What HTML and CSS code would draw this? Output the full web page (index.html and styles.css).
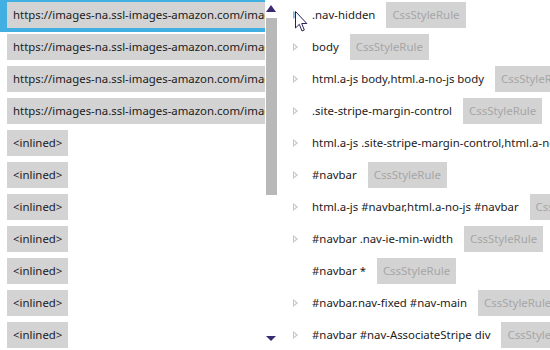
FILE: index.html
```html
<!DOCTYPE html>
<html>
<head>
<meta charset="utf-8">
<link rel="stylesheet" href="styles.css">
</head>
<body>
<div class="app">
  <div class="files">
    <div class="file selected"><span class="btn url">https://images-na.ssl-images-amazon.com/images/G/01/AUIClients/AmazonUI.css</span></div>
    <div class="file"><span class="btn url">https://images-na.ssl-images-amazon.com/images/G/01/AUIClients/NavDesktop.css</span></div>
    <div class="file"><span class="btn url">https://images-na.ssl-images-amazon.com/images/G/01/AUIClients/Footer.css</span></div>
    <div class="file"><span class="btn url">https://images-na.ssl-images-amazon.com/images/G/01/AUIClients/Gateway.css</span></div>
    <div class="file"><span class="btn">&lt;inlined&gt;</span></div>
    <div class="file"><span class="btn">&lt;inlined&gt;</span></div>
    <div class="file"><span class="btn">&lt;inlined&gt;</span></div>
    <div class="file"><span class="btn">&lt;inlined&gt;</span></div>
    <div class="file"><span class="btn">&lt;inlined&gt;</span></div>
    <div class="file"><span class="btn">&lt;inlined&gt;</span></div>
    <div class="file"><span class="btn">&lt;inlined&gt;</span></div>
  </div>
  <div class="scrollbar">
    <div class="arrow up"></div>
    <div class="thumb"></div>
    <div class="track"></div>
    <div class="arrow down"></div>
  </div>
  <div class="rules">
    <div class="rule hover"><span class="twisty"></span><span class="sel">.nav-hidden</span><span class="badge">CssStyleRule</span></div>
    <div class="rule"><span class="twisty"></span><span class="sel">body</span><span class="badge">CssStyleRule</span></div>
    <div class="rule"><span class="twisty"></span><span class="sel">html.a-js body,html.a-no-js body</span><span class="badge">CssStyleRule</span></div>
    <div class="rule"><span class="twisty"></span><span class="sel">.site-stripe-margin-control</span><span class="badge">CssStyleRule</span></div>
    <div class="rule"><span class="twisty"></span><span class="sel">html.a-js .site-stripe-margin-control,html.a-no-js .site-stripe-margin-control</span><span class="badge">CssStyleRule</span></div>
    <div class="rule"><span class="twisty"></span><span class="sel">#navbar</span><span class="badge">CssStyleRule</span></div>
    <div class="rule"><span class="twisty"></span><span class="sel">html.a-js #navbar,html.a-no-js #navbar</span><span class="badge">CssStyleRule</span></div>
    <div class="rule"><span class="twisty"></span><span class="sel">#navbar .nav-ie-min-width</span><span class="badge">CssStyleRule</span></div>
    <div class="rule leaf"><span class="twisty"></span><span class="sel">#navbar *</span><span class="badge">CssStyleRule</span></div>
    <div class="rule"><span class="twisty"></span><span class="sel">#navbar.nav-fixed #nav-main</span><span class="badge">CssStyleRule</span></div>
    <div class="rule"><span class="twisty"></span><span class="sel">#navbar #nav-AssociateStripe div</span><span class="badge">CssStyleRule</span></div>
  </div>
  <svg class="cursor" width="13" height="22" viewBox="0 0 13 22">
    <path d="M0.5 0.5 L0.5 17 L4.3 13.3 L7 20 L9.3 19 L6.7 12.5 L11.8 12.5 Z" fill="#fff" stroke="#2a1f55" stroke-width="1" stroke-linejoin="miter"/>
  </svg>
</div>
</body>
</html>
```

FILE: styles.css
```css
html, body {
  margin: 0;
  padding: 0;
  background: #fff;
}
body {
  font-family: "Noto Sans", "Open Sans", sans-serif;
  font-size: 11.4px;
  color: #1b1b1b;
  width: 550px;
  height: 350px;
  overflow: hidden;
}
.app {
  position: relative;
  display: flex;
  height: 350px;
  overflow: hidden;
}
.files {
  width: 265px;
  flex: none;
  overflow: hidden;
}
.file {
  height: 32px;
  padding: 2px 0 0 7px;
  box-sizing: border-box;
  display: flex;
  align-items: flex-start;
}
.file.selected {
  background: #41afe2;
}
.btn {
  display: block;
  height: 26px;
  line-height: 26px;
  padding: 0 6px;
  background: #d3d3d3;
  white-space: nowrap;
  flex: none;
}
.btn.url {
  overflow: hidden;
}
.scrollbar {
  width: 12px;
  flex: none;
  display: flex;
  flex-direction: column;
  align-items: center;
}
.arrow {
  width: 0;
  height: 0;
  border-left: 5px solid transparent;
  border-right: 5px solid transparent;
  flex: none;
}
.arrow.up {
  margin-top: 5px;
  border-bottom: 7px solid #3a2a72;
}
.arrow.down {
  margin-bottom: 9px;
  border-top: 5px solid #3a2a72;
}
.thumb {
  width: 11px;
  height: 177px;
  margin-top: 6px;
  background: #b8b8b8;
  flex: none;
}
.track {
  flex: 1;
}
.rules {
  flex: 1;
  min-width: 0;
  overflow: hidden;
  padding-left: 16px;
}
.rule {
  height: 32px;
  padding-top: 2px;
  box-sizing: border-box;
  display: flex;
  align-items: flex-start;
  white-space: nowrap;
}
.twisty {
  flex: none;
  width: 0;
  height: 0;
  margin: 9px 14px 0 0;
  border-top: 4px solid transparent;
  border-bottom: 4px solid transparent;
  border-left: 5px solid #c4c4c4;
  position: relative;
}
.twisty::after {
  content: "";
  position: absolute;
  left: -4px;
  top: -2px;
  border-top: 2px solid transparent;
  border-bottom: 2px solid transparent;
  border-left: 2px solid #fff;
}
.rule.hover .twisty {
  border-left-color: #6fb8ea;
}
.rule.hover .twisty::after {
  border-left-color: #9ed2f2;
}
.rule.leaf .twisty {
  visibility: hidden;
}
.sel {
  flex: none;
  line-height: 26px;
}
.badge {
  flex: none;
  margin-left: 11px;
  height: 26px;
  line-height: 26px;
  padding: 0 6px;
  background: #d3d3d3;
  color: #a6a6a6;
}
.cursor {
  position: absolute;
  left: 295px;
  top: 11px;
}
```
